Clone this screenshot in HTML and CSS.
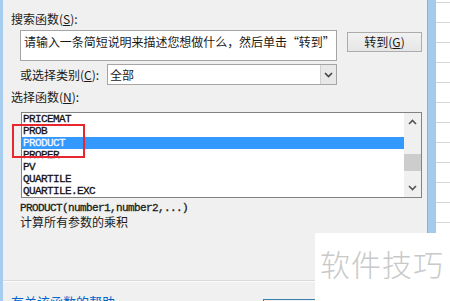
FILE: index.html
```html
<!DOCTYPE html>
<html lang="zh-CN">
<head>
  <meta charset="UTF-8" />
  <title>插入函数</title>
  <link rel="stylesheet" href="styles.css">
</head>
<body>
  <div class="screen">
    <div class="dialog">
      <div class="frame-l"></div>
      <div class="client">
        <div class="label first">搜索函数(<u>S</u>):</div>
        <div class="search-row">
          <div class="search-box">请输入一条简短说明来描述您想做什么，然后单击“转到”</div>
          <div class="btn go">转到(<u>G</u>)</div>
        </div>
        <div class="cat-row">
          <span class="cat-label">或选择类别(<u>C</u>):</span>
          <div class="select">
            <span class="select-text">全部</span>
            <span class="select-arrow">
              <svg width="9" height="6" viewBox="0 0 9 6"><path d="M1 1 L4.5 4.5 L8 1" fill="none" stroke="#444" stroke-width="1.6"/></svg>
            </span>
          </div>
        </div>
        <div class="label third">选择函数(<u>N</u>):</div>
        <div class="listbox">
          <ul class="items">
            <li>PRICEMAT</li>
            <li>PROB</li>
            <li class="sel">PRODUCT</li>
            <li>PROPER</li>
            <li>PV</li>
            <li>QUARTILE</li>
            <li>QUARTILE.EXC</li>
          </ul>
          <div class="scrollbar">
            <svg class="arrow" width="9" height="6" viewBox="0 0 9 6"><path d="M1 5 L4.5 1.5 L8 5" fill="none" stroke="#555" stroke-width="1.6"/></svg>
            <div class="track"><div class="thumb"></div></div>
            <svg class="arrow" width="9" height="6" viewBox="0 0 9 6"><path d="M1 1 L4.5 4.5 L8 1" fill="none" stroke="#555" stroke-width="1.6"/></svg>
          </div>
          <div class="mark-box"></div>
        </div>
        <div class="signature">PRODUCT(number1,number2,...)</div>
        <div class="desc">计算所有参数的乘积</div>
        <div class="sep"></div>
        <div class="bottom-row">
          <span class="help">有关该函数的帮助</span>
          <div class="btn ok">确定</div>
          <div class="btn">取消</div>
        </div>
      </div>
      <div class="frame-r"></div>
    </div>
    <div class="sheet"></div>
    <div class="watermark">软件技巧</div>
  </div>
</body>
</html>
```

FILE: styles.css
```css
body {
  margin: 0;
  font-family: "Noto Sans CJK SC", "Microsoft YaHei", sans-serif;
  font-size: 12px;
  color: #1a1a1a;
}
.screen {
  position: relative;
  display: flex;
  width: 450px;
  height: 301px;
  overflow: hidden;
  background: #fff;
}
.dialog {
  display: flex;
  width: 436px;
  flex: none;
}
.frame-l {
  width: 3px;
  background: #a6cdf0;
}
.frame-r {
  width: 8px;
  background: #a3cbee;
  border-left: 1px solid #8eb0cf;
}
.client {
  flex: 1;
  background: #f0f0f0;
  padding-left: 8px;
}
.label {
  height: 16px;
  line-height: 16px;
}
.label.first {
  margin-top: 11px;
}
.search-row {
  display: flex;
  align-items: flex-start;
  margin-top: 3px;
  margin-left: 9px;
}
.search-box {
  box-sizing: border-box;
  width: 317px;
  height: 31px;
  background: #fff;
  border: 1px solid #a5a5a5;
  padding: 3px 0 0 3px;
  line-height: 15px;
  white-space: nowrap;
  overflow: hidden;
  letter-spacing: -0.05px;
}
.btn {
  box-sizing: border-box;
  width: 75px;
  height: 20px;
  border: 1px solid #acacac;
  background: linear-gradient(#f2f2f2, #e6e6e6);
  text-align: center;
  line-height: 18px;
}
.btn.go {
  margin-left: 10px;
  margin-top: 2px;
}
.cat-row {
  display: flex;
  align-items: center;
  margin-top: 3px;
  margin-left: 9px;
}
.cat-label {
  width: 87px;
}
.select {
  box-sizing: border-box;
  width: 230px;
  height: 21px;
  display: flex;
  background: #fff;
  border: 1px solid #a5a5a5;
}
.select-text {
  flex: 1;
  padding-left: 2px;
  line-height: 19px;
}
.select-arrow {
  width: 15px;
  display: flex;
  align-items: center;
  justify-content: center;
  background: #e8e8e8;
  border-left: 1px solid #d0d0d0;
}
.label.third {
  margin-top: 4px;
}
.listbox {
  position: relative;
  box-sizing: border-box;
  width: 401px;
  height: 86px;
  margin-top: 7px;
  margin-left: 10px;
  border: 1px solid #828282;
  background: #fff;
  display: flex;
}
.items {
  list-style: none;
  margin: 0;
  padding: 0;
  flex: 1;
  font-family: "Liberation Mono", monospace;
  font-size: 11px;
  letter-spacing: -0.6px;
  -webkit-text-stroke: 0.3px currentColor;
  line-height: 12px;
  color: #111;
}
.items li {
  height: 12px;
  padding-left: 1px;
}
.items li.sel {
  background: #3399ff;
  color: #f4f8ff;
}
.scrollbar {
  width: 17px;
  display: flex;
  flex-direction: column;
  align-items: center;
  background: #f0f0f0;
}
.scrollbar .arrow {
  margin: 6px 0;
}
.track {
  flex: 1;
  width: 100%;
  position: relative;
}
.thumb {
  margin-top: 23px;
  height: 17px;
  background: #cdcdcd;
}
.scrollbar .arrow:last-child {
  margin: 2px 0 6px;
}
.mark-box {
  position: absolute;
  left: -10px;
  top: 11px;
  width: 73px;
  height: 34px;
  box-sizing: border-box;
  border: 2px solid #e8262d;
}
.signature {
  margin-top: 4px;
  margin-left: 9px;
  font-family: "Liberation Mono", monospace;
  font-size: 11px;
  letter-spacing: -0.6px;
  -webkit-text-stroke: 0.3px currentColor;
  line-height: 12px;
}
.desc {
  margin-left: 9px;
  line-height: 16px;
}
.sep {
  margin-top: 50px;
  margin-left: -8px;
  border-top: 1px solid #d9d9d9;
  border-bottom: 1px solid #fcfcfc;
}
.bottom-row {
  display: flex;
  align-items: flex-start;
  margin-top: 12px;
}
.help {
  color: #0066cc;
  font-size: 13px;
  line-height: 16px;
  width: 252px;
}
.btn.ok {
  margin-top: 5px;
  border-color: #3c7fb1;
}
.bottom-row .btn + .btn {
  margin-left: 7px;
  margin-top: 5px;
}
.sheet {
  flex: 1;
  background: repeating-linear-gradient(to bottom, #fff 0, #fff 2px, #d8d8d8 2px, #d8d8d8 3px, #fff 3px, #fff 20px);
}
.watermark {
  position: absolute;
  left: 315px;
  top: 233px;
  right: 0;
  bottom: 0;
  background: #fff;
  color: #c9c9c9;
  font-size: 30px;
  font-weight: 300;
  line-height: 30px;
  padding: 15px 0 0 5px;
  letter-spacing: 1px;
}
```
